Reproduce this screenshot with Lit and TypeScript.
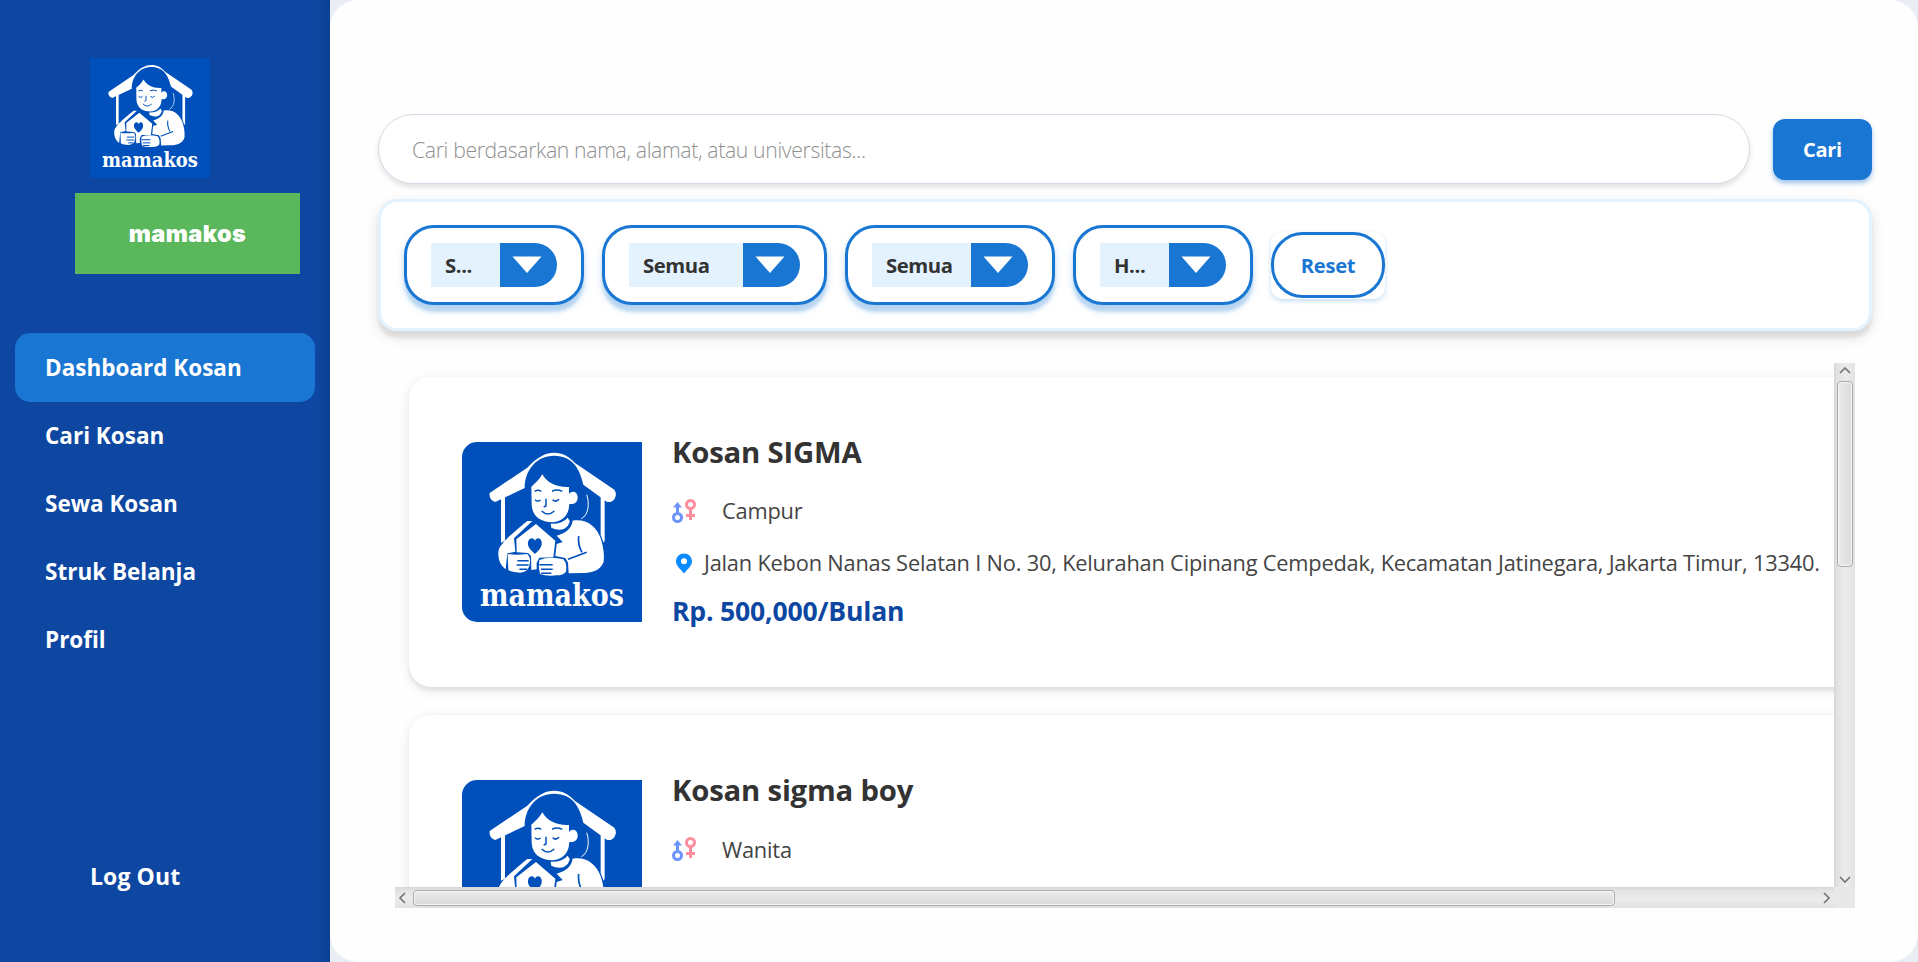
import { LitElement, html, css } from "lit";
import { customElement, property } from "lit/decorators.js";

@customElement("mama-logo")
class MamaLogo extends LitElement {
  static styles = css`
    :host { display: block; }
    svg { display: block; width: 100%; height: 100%; }
    text { font-family: "DejaVu Serif Condensed", "DejaVu Serif", serif; font-weight: bold; font-size: 94px; }
  `;
  render() {
    return html`<svg viewBox="66 66 540 540">
      <rect x="66" y="66" width="540" height="540" fill="#0050bb" />
      <g fill="#fff">
        <path d="M183 232H195V362L183 368ZM482 230H494V362L491 368L482 345Z" />
        <path d="M149 219L262 143C292 110 318 98 342 98C368 98 388 110 404 128L523 209Q532 222 524 236Q514 250 500 245L430 194C420 150 400 107 342 107C290 107 254 150 254 204L166 246Q146 240 149 219Z" />
        <path d="M307 163C298 180 285 190 274 200L275 255C277 288 300 306 338 307C365 305 380 290 386 268L388 252C405 253 414 245 413 230C411 213 395 212 387 222L387 201C350 203 320 188 307 163Z" />
        <path d="M332 311Q368 312 383 293L389 303Q388 318 370 328Q350 332 334 323Z" />
        <path d="M398 302C440 296 468 318 482 355C492 385 493 410 491 425C482 452 455 459 425 459L386 460L384 428L376 414L346 408L350 372L368 366L350 347C380 338 394 325 398 302Z" />
        <path d="M262 303L277 303L222 355L226 395L202 400L197 448C180 435 172 415 176 390C182 372 202 352 262 303Z" />
        <path d="M288 312L346 362L340 412L298 413L290 428L290 448L274 450L273 408L264 399L230 397L229 358Z" />
        <path d="M203 402Q230 407 262 402Q272 412 270 425Q270 455 240 458Q215 457 205 450Z" />
        <path d="M298 420Q330 408 370 418Q382 430 378 455Q370 466 350 466Q320 469 300 462Q294 440 298 420Z" />
      </g>
      <path d="M440 224C449 250 446 285 424 296" fill="none" stroke="#fff" stroke-width="3" />
      <path fill="#0050bb" d="M285 402C270 388 262 380 264 366C268 352 280 352 285 362C290 352 302 352 305 366C307 380 298 390 285 402Z" />
      <g fill="none" stroke="#0050bb" stroke-width="4.5">
        <path d="M284 214Q294 208 304 214M336 214Q350 206 367 214M285 239Q293 247 302 240M338 239Q347 248 357 238M318 236V258L311 261M305 273Q323 291 343 273" />
        <path stroke-width="5" d="M416 348Q413 375 426 397M384 418L440 397" />
        <path d="M232 422H266M230 435H266M238 448H262M298 434H338M303 448H338M303 460H334" />
      </g>
      <text x="120" y="557" fill="#fff" textLength="432" lengthAdjust="spacingAndGlyphs">mamakos</text>
    </svg>`;
  }
}

@customElement("filter-combo")
class FilterCombo extends LitElement {
  @property() label = "";
  static styles = css`
    :host { display: flex; box-sizing: border-box; height: 80px; padding: 15px 24px; border: 3px solid #1976d2; border-radius: 30px; background: #fff; box-shadow: 0 7px 3px rgba(25, 118, 210, 0.2), 0 5px 9px rgba(25, 118, 210, 0.2); }
    .value { flex: 1; display: flex; align-items: center; height: 44px; padding-left: 14px; background: #e3f2fd; color: #333; font-weight: 700; font-size: 20.3px; letter-spacing: -0.4px; }
    .arrow { width: 57px; height: 44px; border-radius: 0 22px 22px 0; background: #1976d2; }
    svg { display: block; }
  `;
  render() {
    return html`<div class="value">${this.label}</div>
      <div class="arrow"><svg width="57" height="44" viewBox="0 0 57 44"><path d="M12.5 13.5H41.5L27 30Z" fill="#fff" /></svg></div>`;
  }
}

@customElement("kosan-card")
class KosanCard extends LitElement {
  @property() name = "";
  @property() gender = "";
  @property() address = "";
  @property() price = "";
  static styles = css`
    :host { display: flex; box-sizing: border-box; width: 1500px; height: 310px; flex: none; padding: 65px 53px; border-radius: 22px; background: #fff; box-shadow: 0 4px 3px rgba(0, 0, 0, 0.05), 0 3px 12px rgba(0, 0, 0, 0.1); }
    mama-logo { width: 180px; height: 180px; flex: none; border-radius: 15px 0 0 15px; overflow: hidden; }
    .info { margin-left: 30px; display: flex; flex-direction: column; white-space: nowrap; color: #444; font-size: 21.8px; letter-spacing: -0.2px; }
    .name { height: 40px; line-height: 40px; margin-top: -10px; color: #333; font-size: 29.3px; font-weight: 700; }
    .row { display: flex; align-items: center; }
    .gender { height: 30px; margin-top: 24px; }
    .gender .t { margin-left: 26px; }
    .address { height: 30px; margin-top: 23px; }
    .address .t { margin-left: 11px; }
    .price { height: 36px; line-height: 36px; margin-top: 16px; color: #0d47a1; font-size: 26.6px; font-weight: 700; }
    svg { display: block; }
  `;
  render() {
    return html`<mama-logo></mama-logo>
      <div class="info">
        <div class="name">${this.name}</div>
        <div class="row gender">
          <svg width="24" height="24" viewBox="0 0 24 24" fill="none" stroke-width="3">
            <g stroke="#6d93ff"><circle cx="5.5" cy="18.5" r="4" /><path d="M5.5 14V5" /></g>
            <path d="M5.5 3L10 8.5H1Z" fill="#6d93ff" />
            <g stroke="#ff8e9d"><circle cx="18.5" cy="5.5" r="4" /><path d="M18.5 10V21M14 16.5H23" /></g>
          </svg>
          <span class="t">${this.gender}</span>
        </div>
        ${this.address ? html`<div class="row address">
          <svg width="21" height="24" viewBox="0 0 21 24"><path d="M12 2.500C7.500 2.500 4 6 4 10.300C4 15 8 17.500 12 22.500C16 17.500 20 15 20 10.300C20 6 16.500 2.500 12 2.500ZM12 7.300A3 3 0 1 1 12 13.300A3 3 0 1 1 12 7.300Z" fill="#0a8bff" fill-rule="evenodd" /></svg>
          <span class="t">${this.address}</span>
        </div>
        <div class="price">${this.price}</div>` : null}
      </div>`;
  }
}

@customElement("app-root")
class AppRoot extends LitElement {
  static styles = css`
    :host { display: flex; width: 1918px; height: 962px; overflow: hidden; background: #e9eef4; font-family: "Open Sans", "Noto Sans", sans-serif; }
    .side { width: 330px; box-sizing: border-box; display: flex; flex-direction: column; padding: 58px 15px 0; color: #fff; font-weight: 700; background: linear-gradient(to left, rgba(0, 0, 0, 0.08), transparent 14px), #0d47a1; }
    .side mama-logo { width: 120px; height: 120px; margin-left: 75px; }
    .brand { width: 225px; height: 81px; margin: 15px 0 0 60px; display: flex; align-items: center; justify-content: center; background: #5ab75c; font: 900 23.5px Inter, sans-serif; letter-spacing: 0.4px; }
    .nav { margin-top: 59px; display: flex; flex-direction: column; font-size: 22.5px; }
    .item { height: 68px; padding-left: 30px; display: flex; align-items: center; border-radius: 15px; }
    .active { background: #1976d2; height: 69px; margin-bottom: -1px; }
    .logout { margin: 173px 0 0 75px; height: 60px; line-height: 60px; font-size: 23px; letter-spacing: 0.1px; }
    .main { width: 1588px; height: 962px; box-sizing: border-box; background: #fefefe; border-radius: 28px; padding: 114px 46px 0 48px; }
    .search { display: flex; align-items: center; gap: 23px; }
    .field { flex: 1; box-sizing: border-box; height: 70px; border: 1.5px solid #d5dbe8; border-radius: 35px; padding-left: 33px; display: flex; align-items: center; background: #fff; color: #909090; font-size: 21.2px; font-weight: 300; letter-spacing: -0.35px; box-shadow: 0 4px 3px rgba(0, 0, 0, 0.04), 0 3px 7px rgba(0, 0, 0, 0.07); }
    .go { width: 99px; height: 61px; margin-top: 1px; border-radius: 12px; display: flex; align-items: center; justify-content: center; background: #1976d2; color: #fff; font-weight: 700; font-size: 20px; letter-spacing: -0.3px; box-shadow: 0 3px 5px rgba(25, 118, 210, 0.45); }
    .filters { box-sizing: border-box; height: 132px; margin-top: 15px; padding: 23px; border: 3px solid #e3f2fd; border-radius: 19px; display: flex; align-items: flex-start; gap: 18px; background: #fff; box-shadow: 0 7px 3px rgba(0, 0, 0, 0.06), 0 6px 14px rgba(0, 0, 0, 0.12); }
    .w180 { width: 180px; }
    .w225 { width: 225px; }
    .w210 { width: 210px; }
    .reset { margin-top: 7px; width: 114px; height: 67px; border-radius: 12px; background: #fff; box-shadow: 0 2px 5px rgba(25, 118, 210, 0.25); }
    .pill { box-sizing: border-box; height: 66px; border: 3px solid #1976d2; border-radius: 32px; display: flex; align-items: center; justify-content: center; color: #1976d2; font-size: 20.2px; font-weight: 700; letter-spacing: -0.3px; }
    .pane { margin: 32px 0 0 17px; width: 1460px; height: 545px; display: grid; grid-template: 524px 21px / 1439px 21px; }
    .view { overflow: hidden; box-sizing: border-box; padding: 14px; display: flex; flex-direction: column; gap: 28px; }
    .bar { display: flex; align-items: center; box-sizing: border-box; }
    .v { flex-direction: column; background: linear-gradient(to right, #d6d6d6, #e2e2e2 15%, #ececec 55%, #e2e2e2); }
    .h { background: linear-gradient(#d6d6d6, #e2e2e2 15%, #ececec 55%, #e2e2e2); }
    .thumb { box-sizing: border-box; border: 1px solid #aaa; border-radius: 4px; box-shadow: inset 0 0 0 1px #f6f6f6; }
    .v .thumb { width: 16px; height: 186px; background: linear-gradient(to right, #ececec, #dadada); }
    .h .thumb { height: 16px; width: 1202px; background: linear-gradient(#ececec, #dadada); }
    .sp { flex: 1; }
    .corner { background: #e8e8e8; }
    svg { display: block; fill: none; stroke: #777; stroke-width: 1.7; }
  `;
  render() {
    return html`
      <div class="side">
        <mama-logo></mama-logo>
        <div class="brand">mamakos</div>
        <div class="nav">
          ${["Dashboard Kosan", "Cari Kosan", "Sewa Kosan", "Struk Belanja", "Profil"].map((t, i) => html`<div class="item ${i ? "" : "active"}">${t}</div>`)}
        </div>
        <div class="logout">Log Out</div>
      </div>
      <div class="main">
        <div class="search">
          <div class="field">Cari berdasarkan nama, alamat, atau universitas...</div>
          <div class="go">Cari</div>
        </div>
        <div class="filters">
          <filter-combo class="w180" label="S..."></filter-combo>
          <filter-combo class="w225" label="Semua"></filter-combo>
          <filter-combo class="w210" label="Semua"></filter-combo>
          <filter-combo class="w180" label="H..."></filter-combo>
          <div class="reset"><div class="pill">Reset</div></div>
        </div>
        <div class="pane">
          <div class="view">
            <kosan-card name="Kosan SIGMA" gender="Campur" address="Jalan Kebon Nanas Selatan I No. 30, Kelurahan Cipinang Cempedak, Kecamatan Jatinegara, Jakarta Timur, 13340." price="Rp. 500,000/Bulan"></kosan-card>
            <kosan-card name="Kosan sigma boy" gender="Wanita"></kosan-card>
          </div>
          <div class="bar v">
            <svg width="21" height="18"><path d="M6 10L11 5L16 10" /></svg>
            <div class="thumb"></div><div class="sp"></div>
            <svg width="21" height="18"><path d="M6 8L11 13L16 8" /></svg>
          </div>
          <div class="bar h">
            <svg width="18" height="21"><path d="M10 6L5 11L10 16" /></svg>
            <div class="thumb"></div><div class="sp"></div>
            <svg width="18" height="21"><path d="M8 6L13 11L8 16" /></svg>
          </div>
          <div class="corner"></div>
        </div>
      </div>`;
  }
}
